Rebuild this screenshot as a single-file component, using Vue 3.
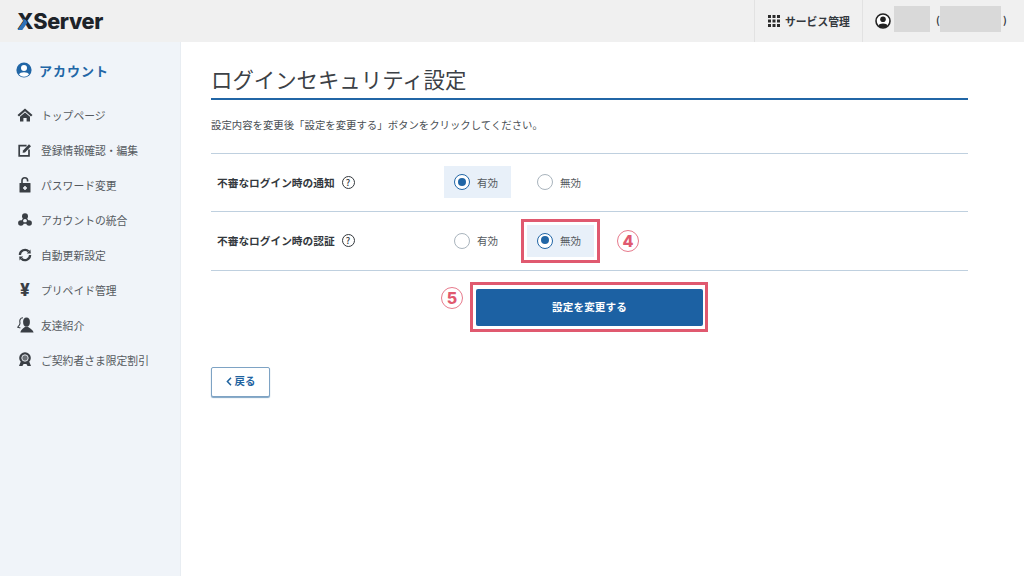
<script setup>
const menu = [
  { id: 'home', label: 'トップページ' },
  { id: 'edit', label: '登録情報確認・編集' },
  { id: 'lock', label: 'パスワード変更' },
  { id: 'merge', label: 'アカウントの統合' },
  { id: 'sync', label: '自動更新設定' },
  { id: 'yen', label: 'プリペイド管理' },
  { id: 'friend', label: '友達紹介' },
  { id: 'medal', label: 'ご契約者さま限定割引' }
]
const dots = [0, 1, 2].flatMap(y => [0, 1, 2].map(x => ({ x: x * 4.5, y: y * 4.5 })))
</script>

<template>
  <div class="page">
    <header class="top">
      <div class="logo"><span class="x">X<svg class="xstroke" viewBox="0 0 18 18"><path d="M0.5 18 L7 8.5 L5.2 5.6 L9.5 7.4 L11 10.4 L5.6 18 Z" fill="#2f72b8"/></svg></span>Server</div>
      <div class="top-right">
        <div class="svc">
          <svg class="grid" width="12" height="12" viewBox="0 0 12 12"><rect v-for="(d, i) in dots" :key="i" :x="d.x" :y="d.y" width="3" height="3" fill="#2b2b2b"/></svg>
          <span>サービス管理</span>
        </div>
        <div class="user">
          <svg width="16" height="16" viewBox="0 0 16 16"><circle cx="8" cy="8" r="7" fill="#fff" stroke="#222" stroke-width="1.6"/><circle cx="8" cy="6.2" r="2.8" fill="#222"/><path d="M3.4 13 C4 9.8 12 9.8 12.6 13 A6.6 6.6 0 0 1 3.4 13Z" fill="#222"/></svg>
          <span class="mask m1"></span>
          <span class="paren p1">(</span>
          <span class="mask m2"></span>
          <span class="paren p2">)</span>
        </div>
      </div>
    </header>
    <div class="body">
      <aside class="side">
        <div class="side-head">
          <svg width="16" height="16" viewBox="0 0 16 16"><circle cx="8" cy="8" r="7.6" fill="#2166a6"/><circle cx="8" cy="6" r="3" fill="#fff"/><path d="M3 12.6 C4 9.4 12 9.4 13 12.6 A6.8 6.8 0 0 1 3 12.6Z" fill="#fff"/></svg>
          <span>アカウント</span>
        </div>
        <ul class="menu">
          <li v-for="m in menu" :key="m.id" class="item">
            <span class="ico">
              <svg v-if="m.id === 'home'" width="16" height="14" viewBox="0 0 16 14"><path d="M8 0.5 L15.5 7 L14 8.4 L8 3.2 L2 8.4 L0.5 7 Z" fill="#3a3f45"/><path d="M8 4.6 L13 8.8 V13.5 H9.6 V10 H6.4 V13.5 H3 V8.8 Z" fill="#3a3f45"/></svg>
              <svg v-else-if="m.id === 'edit'" width="14" height="14" viewBox="0 0 14 14"><path d="M8.6 2.6 H1.2 V12.8 H11 V6.6" fill="none" stroke="#3a3f45" stroke-width="1.7"/><path d="M5 7.4 L11 1.2 L13 3.2 L7 9.4 L4.6 9.8 Z" fill="#3a3f45"/></svg>
              <svg v-else-if="m.id === 'lock'" width="12" height="16" viewBox="0 0 12 16"><path d="M3 6.5 V3.6 A2.8 2.8 0 0 1 8.6 3.6 V4.4" fill="none" stroke="#3a3f45" stroke-width="1.6"/><rect x="0.5" y="6" width="11" height="9.6" rx="0.6" fill="#3a3f45"/><path d="M6 9 V13 M4 11 H8" stroke="#eff3f8" stroke-width="1.5"/></svg>
              <svg v-else-if="m.id === 'merge'" width="14" height="13" viewBox="0 0 14 13"><path d="M7 3 L3 10 H11 Z" fill="none" stroke="#3a3f45" stroke-width="1.4"/><circle cx="7" cy="3.2" r="3" fill="#3a3f45"/><circle cx="2.9" cy="10" r="2.8" fill="#3a3f45"/><circle cx="11.1" cy="10" r="2.8" fill="#3a3f45"/></svg>
              <svg v-else-if="m.id === 'sync'" width="14" height="14" viewBox="0 0 14 14"><path d="M1.9 7 A5.1 5.1 0 0 1 10.6 3.4" fill="none" stroke="#3a3f45" stroke-width="2.3"/><path d="M12.1 7 A5.1 5.1 0 0 1 3.4 10.6" fill="none" stroke="#3a3f45" stroke-width="2.3"/><path d="M8.8 5.4 L12.8 5.4 L12.4 1.4 Z M5.2 8.6 L1.2 8.6 L1.6 12.6 Z" fill="#3a3f45"/></svg>
              <span v-else-if="m.id === 'yen'" class="yen">¥</span>
              <svg v-else-if="m.id === 'friend'" class="wide" width="17" height="16" viewBox="0 0 17 16"><path d="M6 0.8 C3 0.8 2.4 3.6 3 6 C3.2 7.4 2.4 8.6 0.8 10.2 L3.4 11" fill="none" stroke="#3a3f45" stroke-width="1.1"/><ellipse cx="9.5" cy="5" rx="3.4" ry="4.6" fill="#3a3f45"/><path d="M3.4 15.6 C3.8 12 7 11.2 8 9.4 H11 C12 11.2 16 12 16.6 15.6 Z" fill="#3a3f45"/></svg>
              <svg v-else width="14" height="15" viewBox="0 0 14 15"><path d="M2.6 10 L1 14 H4.4 L5.6 12 H8.4 L9.6 14 H13 L11.4 10 Z" fill="#3a3f45"/><circle cx="7" cy="6" r="5.8" fill="#3a3f45"/><circle cx="7" cy="6" r="3.2" fill="#6d7277" stroke="#eff3f8" stroke-width="0.9"/></svg>
            </span>
            <span class="label">{{ m.label }}</span>
          </li>
        </ul>
      </aside>
      <main class="main">
        <h1 class="title">ログインセキュリティ設定</h1>
        <p class="lead">設定内容を変更後「設定を変更する」ボタンをクリックしてください。</p>
        <div class="rows">
          <div class="row">
            <div class="row-label">不審なログイン時の通知<span class="help">?</span></div>
            <div class="opts">
              <div class="opt on"><span class="radio checked"></span>有効</div>
              <div class="opt"><span class="radio"></span>無効</div>
            </div>
          </div>
          <div class="row">
            <div class="row-label">不審なログイン時の認証<span class="help">?</span></div>
            <div class="opts">
              <div class="opt"><span class="radio"></span>有効</div>
              <div class="opt on marked"><span class="radio checked"></span>無効</div>
              <span class="num n4">4</span>
            </div>
          </div>
        </div>
        <div class="submit-row">
          <button class="submit">設定を変更する<span class="num n5">5</span></button>
        </div>
        <button class="back"><svg width="6" height="9" viewBox="0 0 6 9"><path d="M5 0.8 L1.4 4.5 L5 8.2" fill="none" stroke="#1f639f" stroke-width="1.5"/></svg>戻る</button>
      </main>
    </div>
  </div>
</template>

<style>
html, body { margin: 0; background: #fff; }
</style>

<style scoped>
* { box-sizing: border-box; }
.page {
  width: 1024px; height: 576px; overflow: hidden; display: flex; flex-direction: column;
  font-family: "Noto Sans CJK JP", "Noto Sans", sans-serif; color: #4a4f55;
}
.top { height: 42px; background: #f0f0f0; display: flex; justify-content: space-between; align-items: center; flex: none; }
.logo { margin-left: 17px; font: 800 21.7px/40px Inter, "Liberation Sans", sans-serif; color: #1d2329; letter-spacing: -0.35px; display: flex; }
.x { position: relative; display: block; }
.xstroke { position: absolute; left: 0; top: 11.5px; width: 17px; height: 17px; }
.top-right { display: flex; height: 42px; }
.svc { width: 109px; border-left: 1px solid #e2e2e2; border-right: 1px solid #e2e2e2; display: flex; align-items: center; padding-left: 13px; gap: 5px; font-size: 10.8px; font-weight: 700; color: #33383d; white-space: nowrap; }
.grid { flex: none; }
.user { width: 161px; display: flex; align-items: center; padding: 0 0 0 12px; color: #33383d; }
.mask { background: #d9d9d9; height: 26px; margin-top: -4px; display: block; flex: none; }
.m1 { width: 36px; margin-left: 3px; }
.m2 { width: 61px; }
.paren { font-size: 10px; font-weight: 700; margin-top: -3px; }
.p1 { margin-left: 6px; width: 4px; }
.p2 { margin-left: 2px; }
.body { flex: 1; display: flex; min-height: 0; }
.side { width: 181px; flex: none; background: #f0f4f9; border-right: 1px solid #e8edf2; padding: 20px 0 0 17px; }
.side-head { display: flex; align-items: center; gap: 7px; height: 16px; color: #2166a6; font-size: 13px; font-weight: 700; letter-spacing: 1px; margin-left: -1px; }
.menu { list-style: none; margin: 19px 0 0; padding: 0; }
.item { height: 35px; display: flex; align-items: center; font-size: 10.8px; color: #555a60; white-space: nowrap; }
.ico { width: 16px; height: 16px; margin-right: 8px; display: flex; align-items: center; justify-content: center; flex: none; }
.wide { flex: none; margin-left: 1px; }
.yen { font: 800 17px/16px Inter, "Liberation Sans", sans-serif; color: #3a3f45; }
.main { flex: 1; padding: 24px 56px 0 30px; min-width: 0; }
.title { margin: 0; height: 34px; border-bottom: 2px solid #2166a6; font-size: 21.4px; line-height: 25px; font-weight: 400; color: #3c4146; white-space: nowrap; }
.lead { margin: 17px 0 0; height: 15px; font-size: 10.4px; line-height: 15px; color: #4a4f55; white-space: nowrap; }
.rows { margin-top: 21px; border-top: 1px solid #bfd0df; }
.row { height: 58.4px; display: flex; align-items: center; border-bottom: 1px solid #bfd0df; padding: 0 0 1px 6px; }
.row-label { width: 227px; font-size: 10.7px; font-weight: 700; color: #33383d; display: flex; align-items: center; white-space: nowrap; }
.help { width: 13px; height: 13px; margin-left: 7px; border: 1px solid #33383d; border-radius: 50%; font-size: 9px; line-height: 11px; text-align: center; font-weight: 500; }
.opts { display: flex; gap: 16px; align-items: center; }
.opt { width: 67px; height: 32px; display: flex; align-items: center; padding-left: 10px; gap: 7px; font-size: 10.5px; color: #555a60; }
.on { background: #e8f0f9; }
.marked { outline: 3px solid #e0596f; outline-offset: 3px; }
.radio { width: 16px; height: 16px; border-radius: 50%; border: 1px solid #a9b4bd; background: #fff; flex: none; position: relative; }
.checked { border: 1.5px solid #2166a6; }
.checked::after { content: ""; position: absolute; left: 2.5px; top: 2.5px; width: 8px; height: 8px; border-radius: 50%; background: #2166a6; }
.num { width: 22px; height: 22px; border: 1px solid #e77a8c; border-radius: 50%; color: #e0596f; font: 800 16px/20px Inter, "Liberation Sans", sans-serif; text-align: center; display: block; flex: none; }
.n4 { margin-left: 7px; }
.n5 { position: absolute; left: -35px; top: -2px; }
.submit-row { display: flex; justify-content: center; margin-top: 18px; }
.submit { position: relative; width: 227px; height: 37px; border: 0; border-radius: 2px; background: #1c61a3; color: #fff; font: 700 10.6px/35px "Noto Sans CJK JP", sans-serif; letter-spacing: 0.1px; padding: 0 0 1px; }
.submit::before { content: ""; position: absolute; left: -6px; right: -5px; top: -7px; bottom: -6px; border: 3px solid #e0596f; pointer-events: none; }
.back { margin-top: 41px; display: flex; align-items: center; justify-content: center; gap: 3px; width: 59px; height: 30px; background: #fff; border: 1px solid #7ea3c4; border-radius: 2px; box-shadow: 0 1px 1px #7ea3c4; color: #1f639f; font: 700 10.4px/26px "Noto Sans CJK JP", sans-serif; padding: 0 0 1px; }
</style>
